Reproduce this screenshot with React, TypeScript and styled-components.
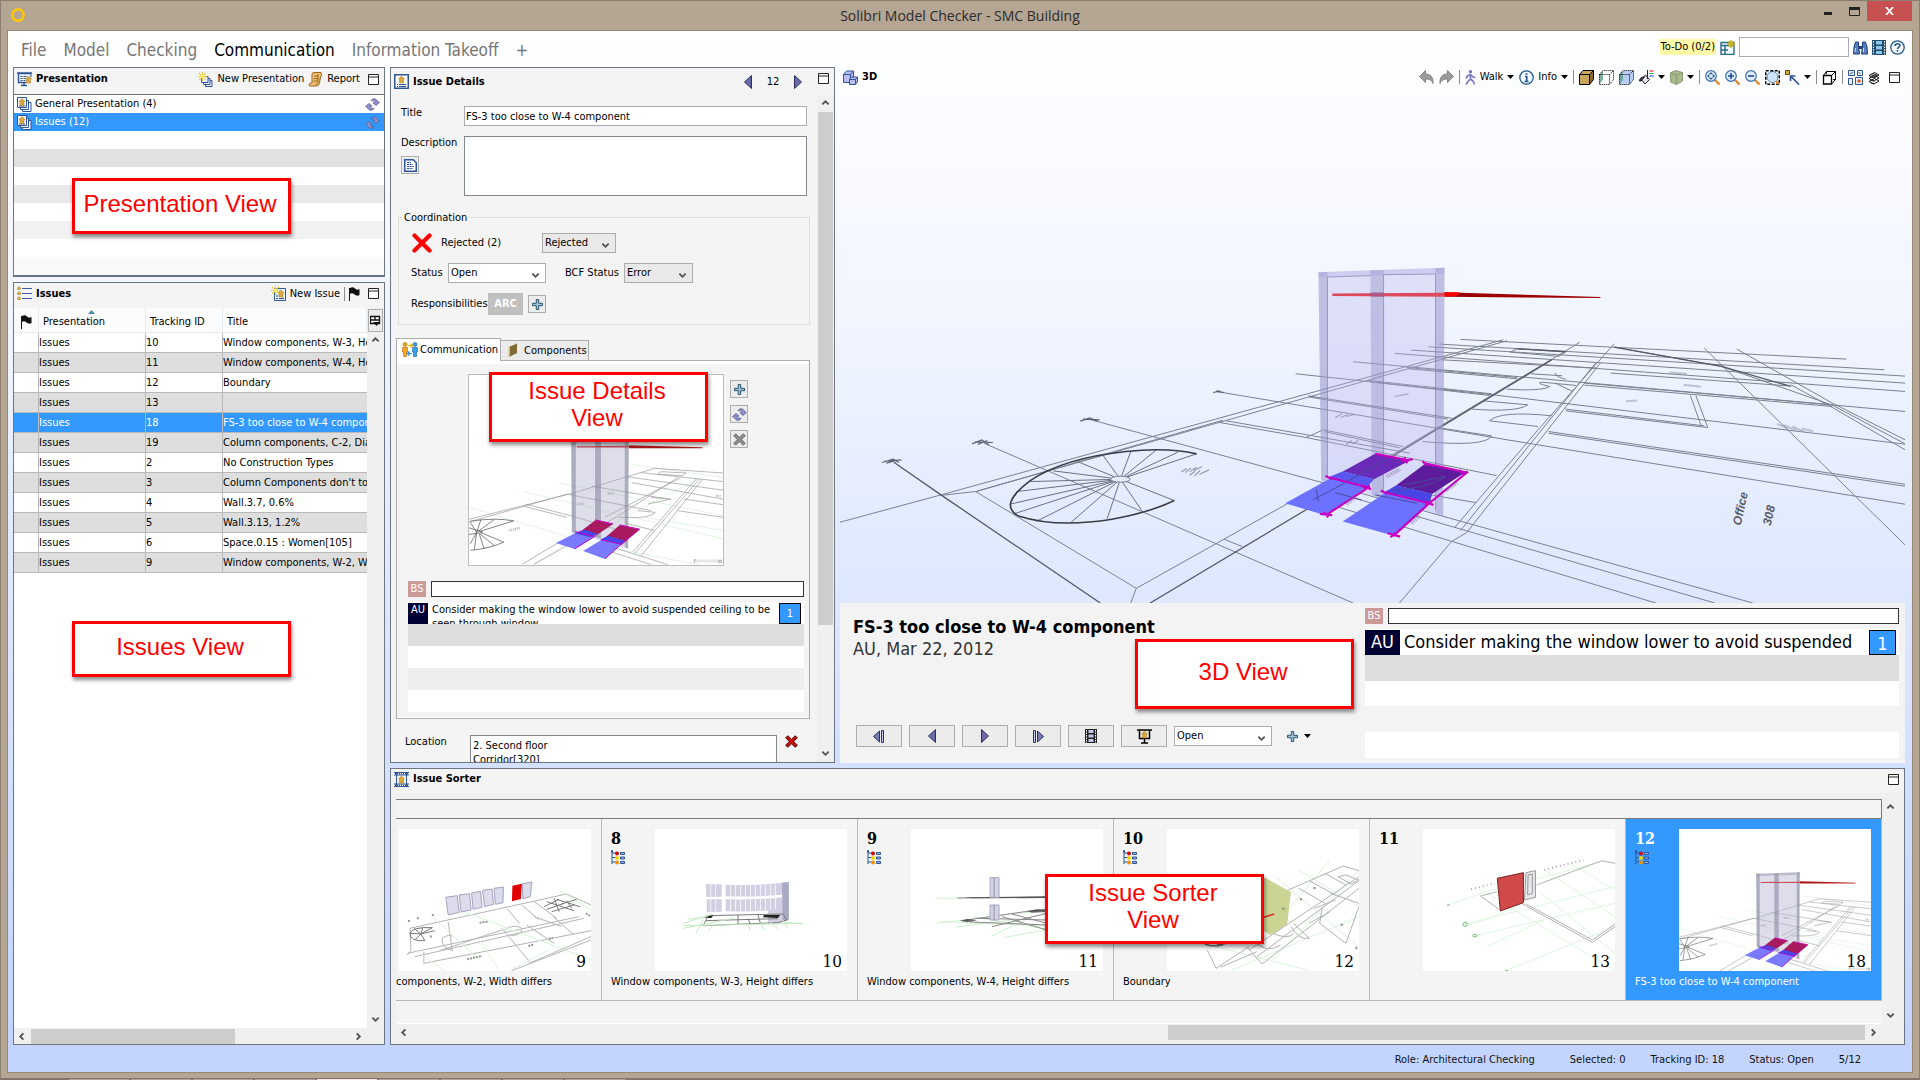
import React from "react";
import styled, { createGlobalStyle, css } from "styled-components";

const ui = `"DejaVu Sans Condensed", "DejaVu Sans", sans-serif`;

const GlobalStyle = createGlobalStyle`
  * { box-sizing: border-box; }
  html, body, #root { height: 100%; margin: 0; }
  body { font: 11px/14px ${ui}; color: #000; overflow: hidden; }
  button, input, select, textarea { font: inherit; color: inherit; margin: 0; border-radius: 0; }
  button { padding: 0; border: 0; background: none; }
  svg { display: block; flex: none; }
`;

/* ---------- window chrome ---------- */

const Desktop = styled.div`
  display: flex;
  flex-direction: column;
  height: 100vh;
  background: #84766c;
`;
const Frame = styled.div`
  flex: 1;
  min-height: 0;
  display: flex;
  flex-direction: column;
  padding: 0 7px 6px;
  background: #b5a593;
  border: 1px solid #8c7e70;
  border-bottom: 0;
`;
const TitleBar = styled.header`
  display: grid;
  grid-template-columns: 1fr auto 1fr;
  height: 29px;
  flex: none;
`;
const TitleIcon = styled.div`
  padding: 6px 2px;
`;
const WindowTitle = styled.h1`
  margin: 0;
  font: 400 14px/30px "Open Sans", "Noto Sans", sans-serif;
  color: #2b2b2b;
`;
const WindowButtons = styled.div`
  display: flex;
  justify-content: flex-end;
  height: 20px;
  padding-right: 0;
`;
const WindowButton = styled.button<{ $close?: boolean }>`
  display: grid;
  place-items: center;
  width: ${(p) => (p.$close ? 45 : 26)}px;
  background: ${(p) => (p.$close ? "#c75050" : "transparent")};
`;
const Client = styled.div`
  flex: 1;
  min-height: 0;
  display: flex;
  flex-direction: column;
  border: 1px solid #978877;
  margin: 0 -1px -1px;
  padding: 0 7px 0 5px;
  background: linear-gradient(#ffffff, #f1f5ff 28%, #dde7ff 55%, #c3d5ff 97%);
`;
const MenuBar = styled.div`
  display: flex;
  justify-content: space-between;
  align-items: center;
  height: 36px;
  flex: none;
  padding-left: 8px;
`;
const MenuNav = styled.nav`
  display: flex;
  gap: 17px;
  padding-top: 1px;
`;
const MenuButton = styled.button<{ $active?: boolean }>`
  font-size: 17px;
  line-height: 24px;
  color: ${(p) => (p.$active ? "#000" : "#767676")};
`;
const Tools = styled.div`
  display: flex;
  align-items: center;
  gap: 4px;
  padding-bottom: 4px;
`;
const Todo = styled.span`
  padding: 1px 1px;
  background: #fff9a8;
  white-space: nowrap;
`;
const SearchInput = styled.input`
  width: 110px;
  height: 20px;
  border: 1px solid #abadb3;
  background: #fff;
`;
const IconButton = styled.button`
  display: grid;
  place-items: center;
`;
const MaxButton = styled(IconButton)<{ $top?: boolean }>`
  margin-left: 4px;
  ${(p) => p.$top && "align-self: flex-start; margin-top: 5px;"}
`;
const Workspace = styled.main`
  flex: 1;
  min-height: 0;
  display: grid;
  grid-template-columns: 372px minmax(0, 1fr);
  gap: 5px;
`;
const LeftColumn = styled.div`
  display: flex;
  flex-direction: column;
  gap: 5px;
  min-height: 0;
`;
const RightColumn = styled.div`
  display: flex;
  flex-direction: column;
  gap: 5px;
  min-height: 0;
`;
const TopRow = styled.div`
  flex: 1;
  min-height: 0;
  display: grid;
  grid-template-columns: 445px minmax(0, 1fr);
  gap: 5px;
`;
const StatusBar = styled.footer`
  display: flex;
  justify-content: flex-end;
  gap: 25px;
  height: 27px;
  line-height: 30px;
  padding-right: 44px;
  color: #111;
`;
const StatusRole = styled.span`
  margin-right: 10px;
`;
const TaskStrip = styled.div`
  display: flex;
  gap: 2px;
  height: 2px;
  padding: 1px 0 0 69px;
`;
const TaskItem = styled.i<{ $on?: boolean }>`
  width: 60px;
  background: ${(p) => (p.$on ? "#efe6e6" : "#b1a29b")};
`;

/* ---------- panels ---------- */

const Panel = styled.section<{ $grow?: boolean }>`
  position: relative;
  display: flex;
  flex-direction: column;
  min-height: 0;
  ${(p) => p.$grow && "flex: 1;"}
  border: 1px solid #6c7683;
  background: #f4f4f4;
`;
const PanelHeader = styled.div<{ $h?: number; $low?: boolean }>`
  display: flex;
  align-items: center;
  gap: 4px;
  flex: none;
  height: ${(p) => p.$h ?? 24}px;
  padding: 0 5px ${(p) => (p.$low ? 0 : 4)}px 3px;
`;
const PanelTitle = styled.h2`
  margin: 0 auto 0 0;
  font-size: 11px;
  font-weight: 700;
`;
const LinkButton = styled.button`
  display: flex;
  align-items: center;
  gap: 4px;
  white-space: nowrap;
`;
const Callout = styled.div<{ $x: number; $y: number; $h?: number }>`
  position: absolute;
  z-index: 5;
  left: ${(p) => p.$x}px;
  top: ${(p) => p.$y}px;
  width: 219px;
  height: ${(p) => p.$h ?? 70}px;
  display: grid;
  place-items: center;
  padding: ${(p) => (p.$h ? "0 3px 6px 0" : "0 33px 6px 30px")};
  border: 3px solid #f00;
  background: #fff;
  box-shadow: 1px 3px 4px rgba(0, 0, 0, 0.45);
  font: 24px/27px "Liberation Sans", Arial, sans-serif;
  color: #f00;
  text-align: center;
`;
const Divider = styled.span`
  width: 1px;
  height: 14px;
  background: #8d8d8d;
`;

/* presentation list */
const PresentationList = styled.ul`
  margin: 0;
  padding: 0;
  list-style: none;
  border-top: 1px solid #6c7683;
  border-bottom: 1px solid #6c7683;
`;
const PresentationItem = styled.li<{ $bg: string; $on?: boolean }>`
  display: flex;
  align-items: center;
  gap: 3px;
  height: 18px;
  padding: 0 4px 0 3px;
  background: ${(p) => p.$bg};
  color: ${(p) => (p.$on ? "#fff" : "#000")};
  span { flex: 1; }
`;

/* issues table */
const TableArea = styled.div`
  flex: 1;
  min-height: 0;
  display: grid;
  grid-template-columns: minmax(0, 1fr) 17px;
  grid-template-rows: minmax(0, 1fr) 16px;
  background: #f0f0f0;
`;
const TableView = styled.div`
  overflow: hidden;
  background: #fff;
`;
const Table = styled.table`
  width: 100%;
  table-layout: fixed;
  border-collapse: separate;
  border-spacing: 0;
`;
const Th = styled.th<{ $w?: number }>`
  ${(p) => p.$w && `width: ${p.$w}px;`}
  height: 25px;
  padding: 3px 0 0 ${(p) => (p.$w === 25 ? 7 : 4)}px;
  font-weight: 400;
  text-align: left;
  background: #fcfcfc;
  border-right: 1px solid #e6ebf3;
  border-bottom: 1px solid #e6ebf3;
`;
const SortHead = styled.div`
  display: grid;
  svg { grid-area: 1 / 1; justify-self: center; margin: -5px 0 0 -5px; }
  span { grid-area: 1 / 1; }
`;
const Td = styled.td`
  height: 20px;
  padding: 0;
  overflow: hidden;
  white-space: nowrap;
  border-right: 1px solid #b9b9b9;
  border-bottom: 1px solid #b9b9b9;
  &:last-child { border-right: 0; }
`;
const Tr = styled.tr<{ $bg: string; $on?: boolean }>`
  background: ${(p) => p.$bg};
  color: ${(p) => (p.$on ? "#fff" : "#000")};
`;

/* scroll bars */
const VBar = styled.div`
  display: flex;
  flex-direction: column;
  align-items: center;
  justify-content: space-between;
  width: 17px;
  background: #f0f0f0;
`;
const VTrack = styled.div`
  flex: 1;
  width: 15px;
`;
const VThumb = styled.div<{ $h: string }>`
  height: ${(p) => p.$h};
  background: #cdcdcd;
`;
const HBar = styled.div`
  display: flex;
  align-items: center;
  height: 16px;
  background: #f0f0f0;
`;
const HTrack = styled.div`
  flex: 1;
  height: 15px;
  display: flex;
`;
const HThumb = styled.div<{ $w: string; $right?: boolean }>`
  width: ${(p) => p.$w};
  background: #cdcdcd;
  ${(p) => p.$right && "margin-left: auto;"}
`;
const ArrowButton = styled.button`
  display: grid;
  place-items: center;
  width: 17px;
  height: 17px;
  flex: none;
`;
const ColumnControl = styled.button`
  display: grid;
  place-items: center;
  width: 15px;
  height: 23px;
  margin: 1px 1px 0;
  border: 1px solid #adadad;
  background: #ececec;
`;

/* form */
const DetailsBody = styled.div`
  flex: 1;
  min-height: 0;
  display: flex;
`;
const DetailsForm = styled.form`
  flex: 1;
  min-width: 0;
  overflow: hidden;
  padding: 11px 7px 0 5px;
`;
const FormRow = styled.div`
  display: grid;
  grid-template-columns: 63px minmax(0, 1fr);
  padding: 0 3px 0 5px;
  margin-bottom: 10px;
`;
const TextInput = styled.input`
  height: 20px;
  padding: 0 1px;
  border: 1px solid #abadb3;
  background: #fff;
`;
const TextBox = styled.textarea`
  display: block;
  height: 60px;
  padding: 2px;
  border: 1px solid #82868f;
  background: #fff;
  resize: none;
  overflow: hidden;
`;
const SmallButton = styled.button`
  display: grid;
  place-items: center;
  width: 18px;
  height: 18px;
  border: 1px solid #adadad;
  background: #ececec;
`;
const LabelStack = styled.div`
  display: flex;
  flex-direction: column;
  align-items: flex-start;
  gap: 6px;
`;
const Fieldset = styled.fieldset`
  margin: 14px 0 13px 2px;
  padding: 8px 0 9px 12px;
  border: 1px solid #dcdcdc;
  min-width: 0;
`;
const Legend = styled.legend`
  margin-left: -9px;
  padding: 1px 3px 0 2px;
`;
const FieldRow = styled.div`
  display: flex;
  align-items: center;
  min-height: 20px;
  margin-top: 10px;
  &:first-of-type { margin-top: 0; }
`;
const FieldLabel = styled.label<{ $w: number }>`
  width: ${(p) => p.$w}px;
`;
const RejectMark = styled.span`
  width: 30px;
`;
const SelectWrap = styled.span<{ $w: number; $gray?: boolean; $gap?: number }>`
  display: grid;
  align-items: center;
  width: ${(p) => p.$w}px;
  height: 20px;
  margin-right: ${(p) => p.$gap ?? 0}px;
  border: 1px solid #acacac;
  background: ${(p) => (p.$gray ? "#e9e9e9" : "#fff")};
  select {
    grid-area: 1 / 1;
    appearance: none;
    width: 100%;
    height: 18px;
    padding: 0 2px;
    border: 0;
    background: none;
  }
  svg { grid-area: 1 / 1; justify-self: end; margin: 4px 5px 0 0; pointer-events: none; }
`;
const RoleTag = styled.span`
  width: 35px;
  margin-right: 5px;
  background: #c0c0c0;
  color: #fff;
  font-size: 11px;
  font-weight: 700;
  line-height: 22px;
  text-align: center;
`;
const TabList = styled.div`
  display: flex;
  align-items: flex-end;
  height: 22px;
`;
const Tab = styled.button<{ $on?: boolean }>`
  display: flex;
  align-items: center;
  gap: 2px;
  height: ${(p) => (p.$on ? 23 : 20)}px;
  padding: 0 2px 1px 5px;
  margin-bottom: ${(p) => (p.$on ? -1 : 0)}px;
  border: 1px solid #acacac;
  border-bottom: 0;
  ${(p) => !p.$on && "border-left: 0; gap: 6px; padding: 0 1px 0 7px;"}
  background: ${(p) => (p.$on ? "#fff" : "#ebebeb")};
  z-index: 1;
`;
const TabPanel = styled.div`
  padding: 13px 5px 6px 11px;
  border: 1px solid #acacac;
  box-shadow: inset 0 3px #fff, inset 0 -1px #fff;
`;
const Snapshot = styled.div`
  display: flex;
  gap: 6px;
  margin: 0 0 15px 60px;
`;
const SnapshotImage = styled.div`
  width: 256px;
  height: 192px;
  border: 1px solid #bdbdbd;
  background: #fff;
`;
const SnapshotTools = styled.div`
  display: flex;
  flex-direction: column;
  gap: 7px;
  padding-top: 6px;
`;
const LocationRow = styled.div`
  display: flex;
  align-items: flex-start;
  margin: 16px 0 0 9px;
`;
const LocationBox = styled.textarea`
  width: 307px;
  height: 60px;
  margin-right: 8px;
  padding: 3px 2px;
  border: 1px solid #82868f;
  background: #fff;
  resize: none;
  overflow: hidden;
`;
const PagerLabel = styled.output`
  width: 34px;
  text-align: center;
`;
const HeaderSpacer = styled.span`
  width: 4px;
`;

/* comments */
const Comments = styled.div<{ $large?: boolean }>`
  display: flex;
  flex-direction: column;
  ${(p) =>
    p.$large &&
    css`
      flex: none;
      width: 534px;
    `}
`;
const NewComment = styled.div`
  display: flex;
  gap: 5px;
  margin-bottom: 5px;
  height: 16px;
`;
const AuthorTag = styled.label`
  width: 18px;
  background: #cc9999;
  color: #fff;
  line-height: 16px;
  text-align: center;
`;
const CommentInput = styled.input`
  flex: 1;
  min-width: 0;
  border: 1px solid #333;
  background: #fff;
`;
const CommentRow = styled.div<{ $large?: boolean; $bg: string }>`
  display: flex;
  height: ${(p) => (p.$large ? 27 : 22)}px;
  padding: 1px 3px 0 0;
  overflow: hidden;
  background: ${(p) => p.$bg};
  ${(p) => p.$large && "font-size: 18px; line-height: 23px;"}
`;
const CommentAuthor = styled.span<{ $large?: boolean }>`
  width: ${(p) => (p.$large ? 35 : 20)}px;
  flex: none;
  background: #000033;
  color: #fff;
  text-align: center;
`;
const CommentText = styled.span`
  flex: 1;
  min-width: 0;
  padding-left: 4px;
`;
const CommentCount = styled.span<{ $large?: boolean }>`
  width: ${(p) => (p.$large ? 27 : 22)}px;
  flex: none;
  line-height: ${(p) => (p.$large ? 25 : 19)}px;
  border: 1px solid #000;
  background: #3399ff;
  color: #fff;
  text-align: center;
`;

/* 3D */
const ThreeD = styled.section`
  display: flex;
  flex-direction: column;
  min-height: 0;
`;
const ThreeDHeader = styled.div`
  display: flex;
  align-items: center;
  height: 20px;
  padding: 0 5px 0 3px;
  gap: 4px;
`;
const ThreeDTools = styled.div`
  display: flex;
  align-items: center;
  gap: 5px;
`;
const Canvas = styled.svg`
  flex: 1 1 0;
  min-height: 0;
  width: 100%;
`;
const InfoPanel = styled.div`
  position: relative;
  display: flex;
  height: 160px;
  flex: none;
  padding: 5px 6px 5px 13px;
  background: #f3f3f3;
`;
const InfoLeft = styled.div`
  flex: 1;
  display: flex;
  flex-direction: column;
`;
const InfoTitle = styled.h3`
  margin: 8px 0 0;
  font-size: 18px;
  line-height: 22px;
`;
const InfoMeta = styled.p`
  margin: 0;
  font-size: 18px;
  line-height: 22px;
  color: #333;
`;
const PlayRow = styled.div`
  display: flex;
  align-items: center;
  gap: 7px;
  margin: auto 0 11px 3px;
`;
const PlayButton = styled.button`
  display: grid;
  place-items: center;
  width: 46px;
  height: 22px;
  border: 1px solid #adadad;
  background: #ececec;
`;
const AddButton = styled.button`
  display: flex;
  align-items: center;
  gap: 6px;
  margin-left: 8px;
`;

/* sorter */
const SorterBody = styled.div`
  display: grid;
  grid-template-columns: minmax(0, 1fr) 22px;
  padding: 6px 0 0 5px;
  background: #f0f0f0;
`;
const SorterMain = styled.div`
  background: #f4f4f4;
  border-bottom: 1px solid #fff;
  padding-bottom: 22px;
`;
const SorterBand = styled.div`
  height: 20px;
  border: 1px solid #7c7c7c;
  border-left: 0;
`;
const SorterCells = styled.ol`
  display: flex;
  margin: 0;
  padding: 0;
  list-style: none;
  border-bottom: 1px solid #b9b9b9;
`;
const SorterCell = styled.li<{ $on?: boolean; $first?: boolean }>`
  ${(p) => (p.$first ? "flex: 1; min-width: 0;" : "flex: none; width: 256px;")}
  height: 181px;
  padding: 10px 10px 0 0;
  border-right: 1px solid #b9b9b9;
  background: ${(p) => (p.$on ? "#3399ff" : "transparent")};
  color: ${(p) => (p.$on ? "#fff" : "#000")};
`;
const CellTop = styled.div`
  display: flex;
  justify-content: flex-end;
`;
const CellSide = styled.div<{ $first?: boolean }>`
  flex: 1;
  min-width: 0;
  padding-left: ${(p) => (p.$first ? 0 : 9)}px;
`;
const CellIndex = styled.b`
  display: block;
  margin-bottom: 1px;
  font: 700 16px/20px "DejaVu Serif Condensed", "DejaVu Serif", serif;
`;
const Thumb = styled.div`
  flex: none;
  display: grid;
  width: 192px;
  height: 142px;
  background: #fff;
  overflow: hidden;
  svg { grid-area: 1 / 1; }
`;
const ThumbId = styled.span`
  grid-area: 1 / 1;
  align-self: end;
  justify-self: end;
  padding-right: 5px;
  font: 400 17px/20px "DejaVu Serif Condensed", "DejaVu Serif", serif;
  color: #000;
`;
const CellCaption = styled.div<{ $first?: boolean }>`
  height: 20px;
  padding: 4px 0 0 ${(p) => (p.$first ? 0 : 9)}px;
  white-space: nowrap;
`;
const SorterScroll = styled(HBar)`
  height: 20px;
  padding-bottom: 4px;
`;
const ColumnTools = styled.div`
  width: 17px;
`;

/* ---------- icons ---------- */

const blue = "#2f5597";
const gold = "#d9a93a";

const I = ({ s = 15, children }: { s?: number; children: React.ReactNode }) => (
  <svg width={s} height={s} viewBox="0 0 15 15" fill="none">{children}</svg>
);
const House = ({ x = 0, y = 0 }) => (
  <path d={`M${x + 3} ${y}l3 3h-1v4h-4v-4h-1z`} fill={gold} stroke="#a67820" strokeWidth=".5" />
);
const BoardIcon = () => (
  <I><path d="M14 1.500H1.500v9H9M0 1h15M4 13.500h6M7 10v3" stroke={blue} strokeWidth="1.400" /><path d="M3.500 4.500h2m1 0h3M3.500 6.500h2m1 0h2M3.500 8.500h2m1 0h2" stroke={blue} /><path d="M14 2v3" stroke={blue} /><House x={8.500} y={4} /></I>
);
const StackIcon = () => (
  <I><path d="M5.500 5.500h8.500v9H5.500z" fill="#f5f8ff" stroke={blue} /><path d="M3.500 3.500h8v9h-8z" fill="#f5f8ff" stroke={blue} /><path d="M.5.500h9v10h-9z" fill="#f5f8ff" stroke={blue} /><path d="M2 9h6" stroke={blue} /><House x={2} y={1.500} /></I>
);
const Star = () => (
  <><path d="M4.500 0v9M0 4.500h9M1 1l7 7M8 1L1 8" stroke="#e3c52e" strokeWidth="1.200" strokeDasharray="1.500 .5" /><circle cx="4.500" cy="4.500" r="2" fill="#fbe96a" /></>
);
const NewStackIcon = () => (
  <I><path d="M7.500 8.500h6.500v6H7.500z" fill="#eaf1ff" stroke={blue} /><path d="M5.500 6.500h6.500v6H5.500z" fill="#eaf1ff" stroke={blue} /><path d="M3.500 4.500h6.500v6H3.500z" fill="#eaf1ff" stroke={blue} /><Star /></I>
);
const ScrollIcon = () => (
  <I><path d="M4 2.500Q4 .5 6 .5h7Q14.500 3 12.500 5L11.500 11Q11 14 8 14H1.500Q0 12 2.500 11H4z" fill="#f0c070" stroke="#9c6420" /><path d="M6 4h4M6 6.500h4M5.500 9h4M10 2v8l-2 3" stroke="#9c6420" /></I>
);
const MaxIcon = () => (
  <svg width="11" height="11" viewBox="0 0 11 11"><path d="M.5.5h10v10H.5zM.5 3h10" fill="#fff" stroke="#222" /></svg>
);
const RefreshIcon = () => (
  <I><path d="M14.500 5.500L11 8.500 8 6l1.500-.5C9 3.500 7.500 3 6 4c.5-2.500 5-4 7 1z" fill="#8f8fcc" stroke="#54548e" strokeWidth=".7" /><path d="M.5 9.500L4 6.500 7 9l-1.500.5c.5 2 2 2.500 3.500 1.500-.5 2.500-5 4-7-1z" fill="#8f8fcc" stroke="#54548e" strokeWidth=".7" /></I>
);
const ListIcon = () => (
  <I><path d="M5 2.500h10M5 7.500h10M5 12.500h10" stroke="#3a5aa8" /><path d="M2 .5L3.500 2v1.500h-3V2zM2 5.500L3.500 7v1.500h-3V7zM2 10.500L3.500 12v1.500h-3V12z" fill={gold} stroke="#a67820" strokeWidth=".5" /></I>
);
const NewIssueIcon = () => (
  <I><path d="M3.500 2.500h11v12h-11z" fill="#eaf1ff" stroke={blue} /><path d="M5 12.500h2m1 0h5M5 10h2" stroke={blue} /><House x={7} y={4} /><Star /></I>
);
const FlagIcon = () => (
  <svg width="11" height="14" viewBox="0 0 11 14"><path d="M.5 1v13" stroke="#111" /><path d="M1 1q3-1.500 5 .5t4.500.5V8Q8 9.500 5.500 7.500T1 7z" fill="#111" /></svg>
);
const DetailsIcon = () => (
  <I><path d="M.75.750h13.500v13.500H.75z" fill="#fff" stroke={blue} strokeWidth="1.500" /><path d="M3 12.500h1m1 0h7M3 10.500h1m1 0h7" stroke={blue} /><House x={4.500} y={2} /></I>
);
const SorterIcon = () => (
  <I><path d="M2.500 0v15M12.500 0v15" stroke={blue} /><path d="M0 .5h15M0 3h15M0 12h15M0 14.500h15" stroke={blue} /><path d="M1 1.700h14M1 13.200h14" stroke={blue} strokeWidth="1.600" strokeDasharray="1 1" /><House x={4.500} y={4} /></I>
);
const Tri = ({ flip }: { flip?: boolean }) => (
  <svg width="8" height="14" viewBox="0 0 8 14"><path d={flip ? "M.5.500L7.500 7 .5 13.500z" : "M7.500.500L.5 7l7 6.500z"} fill="#6a6aa8" stroke="#2d2d5e" /></svg>
);
const NoteIcon = () => (
  <svg width="13" height="13" viewBox="0 0 13 13" fill="none"><path d="M.75.750h8.500l3 3v8.500H.75z" fill="#fff" stroke={blue} strokeWidth="1.500" /><path d="M3 3.500h4M3 5.500h6M3 7.500h7M3 9.500h6" stroke={blue} strokeDasharray="2 .7" /></svg>
);
const RedX = () => (
  <svg width="21" height="20" viewBox="0 0 21 20"><path d="M3.500 2.500l15 15M18.500 2.500l-15 15" stroke="#f00" strokeWidth="4.200" strokeLinecap="round" /></svg>
);
const CrossIcon = ({ c = "#cc1111", e = "#5c0000" }) => (
  <svg width="13" height="13" viewBox="0 0 13 13"><path d="M1.500 1.500l10 10M11.500 1.500l-10 10" stroke={e} strokeWidth="3.800" /><path d="M2 2l9 9M11 2l-9 9" stroke={c} strokeWidth="2.200" /></svg>
);
const PlusIcon = () => (
  <svg width="11" height="11" viewBox="0 0 11 11"><path d="M4.300.5h2.400v3.800h3.800v2.400H6.700v3.800H4.300V6.700H.5V4.300h3.800z" fill="#9cc3dc" stroke="#2c5670" /></svg>
);
const PeopleIcon = () => (
  <svg width="16" height="15" viewBox="0 0 16 15"><circle cx="3" cy="2.500" r="2" fill="#f5a623" stroke="#b06a00" strokeWidth=".6" /><path d="M.5 5.500h5V10h-1v4.500h-3V10h-1z" fill="#f5a623" stroke="#b06a00" strokeWidth=".6" /><circle cx="13" cy="2.500" r="2" fill="#3aa0e8" stroke="#1d5f9c" strokeWidth=".6" /><path d="M10.500 5.500h5V10h-1v4.500h-3V10h-1z" fill="#3aa0e8" stroke="#1d5f9c" strokeWidth=".6" /><path d="M6 3.500h3M9 1.500l2 2-2 2z" stroke="#e8b400" fill="#e8b400" /><path d="M7 11.500h3M7 9.500l-2 2 2 2z" stroke="#2d8fe0" fill="#2d8fe0" /></svg>
);
const ComponentIcon = () => (
  <svg width="10" height="15" viewBox="0 0 10 15"><path d="M1 4l8-3.500V10L1 14z" fill="#7d6a35" /><path d="M.5 4v10l1.500-.7V3.500z" fill="#d2bf86" /></svg>
);
const Chevron = ({ d }: { d: "up" | "down" | "left" | "right" }) => {
  const paths = { up: "M1.500 6L5 2.500 8.500 6", down: "M1.500 3L5 6.500 8.500 3", left: "M6 1.500L2.500 5 6 8.500", right: "M3 1.500L6.500 5 3 8.500" };
  return <svg width="9" height="9" viewBox="0 0 10 10"><path d={paths[d]} fill="none" stroke="#505050" strokeWidth="2" /></svg>;
};
const Caret = () => <svg width="7" height="4" viewBox="0 0 7 4"><path d="M0 0h7L3.500 4z" fill="#000" /></svg>;
const CubesIcon = () => (
  <I><path d="M.5 4.500l3-3.500h7v8l-3 3.500h-7z" fill="#b9bdf0" stroke={blue} /><path d="M.5 4.500h7v8M7.500 4.500l3-3.500" stroke={blue} /><path d="M6.500 9l2-2h6v5l-2 2.500h-6z" fill="#b9bdf0" stroke={blue} /><path d="M6.500 9.500h6v5M12.500 9.500l2-2.500" stroke={blue} /></I>
);
const UndoIcon = ({ flip }: { flip?: boolean }) => (
  <svg width="15" height="14" viewBox="0 0 15 14"><path transform={flip ? "matrix(-1 0 0 1 15 0)" : undefined} d="M6.500.500v3.500c5 0 8 3 7.500 9.500C12.500 10 10.500 9 6.500 9v3.500L.5 6.500z" fill="#9b9b9b" stroke="#858585" /></svg>
);
const WalkIcon = () => (
  <svg width="11" height="15" viewBox="0 0 11 15" fill="none"><circle cx="5.500" cy="1.800" r="1.800" fill="#7d78c4" /><path d="M5.500 4v5L3 11.500 1 14.500M5.500 9L8 11l1.500 3.500M5.500 4.500L2.500 6 1 8.500M5.500 4.500L8 7l2.500.5" stroke="#7d78c4" strokeWidth="1.700" /></svg>
);
const InfoIcon = ({ t = "i" }) => (
  <I><circle cx="7.500" cy="7.500" r="6.700" fill="#f4f9ff" stroke="#25598c" strokeWidth="1.300" />{t === "i" ? <path d="M7.500 3v1.800M6 6.500h1.700V11M5.500 11.500h4" stroke="#25598c" strokeWidth="1.700" /> : <path d="M5 6c0-3 5-3 5-.5 0 1.500-2.500 1.700-2.500 3.500M7.500 10v1.800" stroke="#25598c" strokeWidth="1.600" />}</I>
);
const BoxIcon = ({ f = "#c9a55a", side = "#8c6c2c", e = "#000", dash }: { f?: string; side?: string; e?: string; dash?: boolean }) => (
  <I><path d="M.5 4.500L4 .5h10.500v9l-4 5H.5z" fill={f} /><path d={dash ? "M.5 4.500L4 .5v9l-3.500 5z" : "M10.500 4.500l4-4v9l-4 5z"} fill={side} /><path d="M.5 4.500L4 .5h10.500v9l-4 5H.5zM.5 4.500h10v10M10.500 4.500l4-4" stroke={e} strokeDasharray={dash ? "1 1" : undefined} /></I>
);
const PaintIcon = () => (
  <I><path d="M10.500 1h4" stroke="#f00" /><path d="M10.500 3.500h4" stroke="#1fae3a" /><path d="M10.500 6h4" stroke="#22f" /><path d="M2 9l4.500-4 4 4.500-4.500 4.500z" fill="#e4e4f0" stroke="#222" /><path d="M.5 11q0-4 5-4l-3.500 4zM8.500 0v9" fill="#3c3c6e" stroke="#222" /></I>
);
const PrismIcon = () => (
  <svg width="13" height="15" viewBox="0 0 13 15"><path d="M.5 3l5-2.500 7 2v8.500L6.500 14.500l-6-2.500z" fill="#a9b98c" stroke="#8b9a70" /><path d="M.5 3l6 2 6-2.500M6.500 5v9.500" fill="none" stroke="#8b9a70" /></svg>
);
const ZoomIcon = ({ k }: { k: "fit" | "in" | "out" }) => (
  <I><path d="M10 10l4.500 4.500" stroke="#e08a30" strokeWidth="2.400" /><circle cx="6" cy="6" r="5.300" fill="#dceafa" stroke="#3c6ea5" strokeWidth="1.200" /><path d={k === "fit" ? "M6 2.500L4.500 4h3zM6 9.500L4.500 8h3zM2.500 6L4 4.500v3zM9.500 6L8 4.500v3z" : k === "in" ? "M3 6h6M6 3v6" : "M3 6h6"} fill="#1f4f8b" stroke="#1f4f8b" strokeWidth={k === "fit" ? 0.5 : 1.6} /></I>
);
const ZoomAreaIcon = () => (
  <I><circle cx="7.500" cy="7" r="5.500" fill="#cfe3f7" stroke="#5b8fc4" /><path d="M.75.750h13.500v13.500H.75z" stroke="#000" strokeWidth="1.500" strokeDasharray="3 1.500" /><path d="M11 11l3 3" stroke="#e08a30" strokeWidth="2" /></I>
);
const PickIcon = () => (
  <I><path d="M.5.500h4v4h-4z" fill={gold} stroke="#5a4210" /><path d="M5.500 6l8.500 8.500M5.500 11V6h5" stroke={blue} strokeWidth="1.700" /></I>
);
const SheetsIcon = () => (
  <I><path d="M4.500 4V1.500h9v8h-2.500" fill="#fff" stroke="#000" /><path d="M1.500 5.500h8v8.500h-8z" fill="#fff" stroke="#000" strokeWidth="1.300" /><path d="M1.500 5.500l3-4M9.500 5.500l4-4M9.500 14l4-4.500" stroke="#000" /></I>
);
const PlanIcon = () => (
  <I><path d="M.5.500h6v5h-6zM9.500.500h5v5h-5zM.5 8.500h4v6h-4zM7.500 7.500h7v7h-7z" fill="#eaf1ff" stroke={blue} /><circle cx="11" cy="11" r="1.800" fill="#e05a1c" /><path d="M2 4l3-2M10.500 2l2 2" stroke={blue} /></I>
);
const LayersIcon = () => (
  <svg width="12" height="15" viewBox="0 0 12 15"><path d="M1 11.500l5 2.500 5-3-4.500-2.500zM1 8.500l5 2.500 5-3-4.500-2.500zM1 5.500l5 2.500 5-3L6.500 2.500z" fill="#fff" stroke="#111" /><path d="M3 4.500l5 2M5 3.500l4.500 2M3 7l3.500-2.500M5 8l4-3M3 10l3 1.500M3 13l3 1" stroke="#111" strokeWidth=".8" /></svg>
);
const TodoIcon = () => (
  <I><path d="M1 2.500h13v12H1zM1 5.500h13M5 6v9M1 10h7" stroke="#2a6a86" strokeWidth="1.400" fill="#f2f8ff" /><path d="M11 0v8M7 4h8M8.500 1.500l5 5M13.500 1.500l-5 5" stroke="#c9b31c" strokeWidth="1.500" /></I>
);
const BinocularsIcon = () => (
  <I><path d="M2.500 2h3v4l1 8H.5l.5-7zM12.500 2h-3v4l-1 8h6L14 7z" fill="#5a7fb8" stroke="#1d3e78" /><path d="M6 6h3v3H6z" fill="#1d3e78" /><path d="M2.500 8l-.5 4M10.500 8v4" stroke="#cfe0f7" /></I>
);
const FilmIcon = ({ c = "#1d4a6e", m = "#8fc7e8" }) => (
  <svg width="14" height="15" viewBox="0 0 14 15"><path d="M0 0h14v15H0z" fill={c} /><path d="M1.500 1v14M12.500 1v14" stroke="#fff" strokeWidth="1.200" strokeDasharray="1.500 1.200" /><path d="M4 1h6v3.500H4zM4 6h6v3.500H4zM4 11h6v3H4z" fill={m} /></svg>
);
const FilmStripIcon = () => (
  <svg width="12" height="14" viewBox="0 0 12 14"><path d="M0 0h12v14H0z" fill="#222" /><path d="M1.500 1v13M10.500 1v13" stroke="#fff" strokeDasharray="1.500 1" /><path d="M3.500 1h5v3h-5zM3.500 5.500h5v3h-5zM3.500 10h5v3h-5z" fill="#c9c9ea" /></svg>
);
const TreeIcon = () => (
  <I><path d="M1 0v14M1 3h4M1 7.500h4M1 12h4" stroke={blue} /><path d="M0 .5h2v2H0z" fill={blue} /><circle cx="6" cy="3.500" r="2" fill="#d00" /><circle cx="6" cy="8" r="2" fill="#f2d400" /><circle cx="6" cy="12.500" r="2" fill="#f29100" /><path d="M9.500 2.500h4v2h-4zM9.500 7h4v2h-4zM9.500 11.500h4v2h-4z" fill="#9fb9e4" stroke={blue} /></I>
);
const StepIcon = ({ flip }: { flip?: boolean }) => (
  <svg width="12" height="13" viewBox="0 0 12 13"><g transform={flip ? "matrix(-1 0 0 1 12 0)" : undefined} fill="#7a7ab6" stroke="#2d2d5e"><path d="M6.500 1v11L.5 6.500z" /><path d="M8.500.500h2v12h-2z" fill="#c9c9ea" /></g></svg>
);
const ProjectorIcon = () => (
  <I><path d="M0 1h15M2.500 1v8.500h10V1M7.500 10v4M4 14h7" stroke="#000" strokeWidth="1.500" /><House x={4.500} y={2} /></I>
);

/* ---------- drawings ---------- */

const spokes = [[522,642],[495,637],[463,632],[427,635],[387,647],[350,665],[315,693],[282,725],[262,755],[252,793],[258,822],[290,845],[340,849],[393,836],[443,812],[490,782]];

const Model = () => (
  <Canvas viewBox="840 87 1064 516" preserveAspectRatio="xMidYMax slice" role="img" aria-label="3D model">
    <g transform="translate(835 240) scale(.692 .33333)" fill="none">
      <g stroke="#7c828c">
        <path vectorEffect="non-scaling-stroke" d="M7 847L153 765L965 300M155 766L203 755L970 303M205 754L560 541M203 755L435 1045L427 1089M435 1045L693 745L722 758M562 898L588 920" />
        <path vectorEffect="non-scaling-stroke" d="M215 610L748 1089M370 540L728 742L1325 1089M700 785L1185 1089M722 758L1270 1089M550 455L1000 610L1545 793M665 402L950 465L1545 613M748 366L1545 515M808 341L1545 455M832 331L1545 430M857 321L1545 409M872 313L1515 390M903 299L1460 358" />
        <path vectorEffect="non-scaling-stroke" d="M700 775L1035 358M712 768L1075 308M1125 312L1015 570L895 862M1105 370L912 878M1098 370L903 872M890 905L815 1089M890 905L912 878M1125 322L1280 380L1440 496L1545 612M1380 435L1440 503L1545 630M1302 328L1440 490L1545 600M1255 325L1545 915" />
        <path vectorEffect="non-scaling-stroke" d="M553 547L680 593L955 707M565 543L690 588L830 640M680 593L705 570L820 620M708 576L815 624M683 468L890 535M685 472L885 538M770 422L948 462M772 426L945 467M825 383L985 413M828 387L985 417M875 360L1100 385M1055 508L1255 558M1055 513L1260 563L1243 468M1235 467L1250 555M1120 400L1375 438M1082 430L1440 495M1082 436L1440 500M1030 575L1545 733M1030 580L1545 739M860 765L925 788M1040 430L1065 455" />
        <path vectorEffect="non-scaling-stroke" d="M975 337L985 327L1055 336L1045 350zM920 508Q985 518 1000 495L935 483M1035 528Q960 512 945 543M945 543L1015 560M848 605Q940 622 948 588L875 565M970 448Q1020 455 1032 440Q1010 430 1020 427L1070 437M1005 402L1050 408M1040 400Q1040 412 1055 418M800 752Q850 750 882 710" />
        {spokes.map(([x, y]) => <path key={x} stroke="#6c717a" vectorEffect="non-scaling-stroke" d={`M412 718L${x} ${y}`} />)}
        <ellipse cx="412" cy="718" rx="14" ry="9" vectorEffect="non-scaling-stroke" fill="#e6ecfb" />
      </g>
      <path vectorEffect="non-scaling-stroke" stroke="#3a3d44" strokeWidth="1.600" d="M522 642Q480 622 420 635Q330 655 282 722Q235 795 265 828Q320 865 400 838Q455 817 490 782" />
      <path vectorEffect="non-scaling-stroke" stroke="#555a63" strokeWidth="1.300" d="M85 667L153 765L383 1089M455 1089L700 785M1125 322L1280 380L1380 440M985 327L1055 336M720 755L1035 360" />
      <path vectorEffect="non-scaling-stroke" stroke="#5e626c" strokeWidth="1.200" d="M68 668L84 658L92 668M72 664L96 660M74 670L88 662M198 612L212 600L222 614M202 606L228 608M206 614L220 602M354 544L368 534L378 544M358 538L382 540M546 458L556 453M550 454L562 458" />
      <path vectorEffect="non-scaling-stroke" stroke="#7b808b" strokeWidth="1.200" d="M500 696L508 686M506 698L514 684M512 696L522 682M518 692L530 680M512 706L520 694M519 708L527 692M526 704L540 690M722 534L732 522M730 534L740 524M738 530L750 524M808 470L828 462M738 614L746 602M746 612L756 602" opacity=".75" />
      <path vectorEffect="non-scaling-stroke" stroke="#9297a3" strokeWidth="2" d="M1360 552L1376 566M1370 556L1388 572M1382 560L1400 576M1396 566L1412 574M1225 435L1250 441M1142 484L1158 482M1205 398L1230 402" opacity=".5" />
      <g>
        <path d="M698 98L880 84L878 828L785 772L702 722z" fill="#b9b3ea" fillOpacity=".34" />
        <path d="M698 98L880 84V102L698 112z" fill="#b9b9ea" fillOpacity=".5" />
        <path d="M698 98L711 97V728L702 722zM773 92L792 91V778L775 766zM867 85L880 84L878 828L867 820z" fill="#8d88c0" fillOpacity=".38" />
        <path vectorEffect="non-scaling-stroke" d="M711 112V715M792 105V760M867 103V810M711 112L773 108M792 105L867 103" stroke="#8480b4" strokeOpacity=".7" />
      </g>
      <path d="M718 161L880 159V171L718 169z" fill="#dc4a5c" />
      <path d="M880 158L1105 172V175L880 171z" fill="#9c0000" />
      <path d="M880 158L902 158L898 168L880 170z" fill="#f00" />
      <path d="M773 158L792 158V171H773z" fill="#9b5a90" fillOpacity=".7" />
      <path d="M780 642L830 662L778 718L733 695z" fill="#6a2ab8" />
      <path d="M733 695L778 718L768 742L708 826L650 790z" fill="#6c72ff" />
      <path d="M712 712L733 695L778 718L768 742z" fill="#5a56f0" />
      <path d="M853 670L910 697L862 762L810 737z" fill="#5c1c9c" />
      <path d="M810 737L862 762L858 792L808 888L733 845z" fill="#6c72ff" />
      <path d="M793 757L810 737L862 762L858 790z" fill="#4a44e4" />
      <path vectorEffect="non-scaling-stroke" stroke="#4a4a9a" d="M690 780L722 745L795 660M695 748L698 785M722 758L760 780M805 750Q850 750 882 710L820 735M780 765L840 790" />
      <path vectorEffect="non-scaling-stroke" stroke="#c800c0" strokeWidth="2.200" d="M780 642L830 662M712 712L770 743L710 824M850 670L912 698L858 790L806 888M793 757L858 790M822 652L826 670M818 664L834 658M700 822L718 826M706 816L712 832M760 738L774 748M764 750L772 736M902 690L908 708M904 702L914 696M850 785L864 795M852 796L862 782M798 880L816 890M802 892L810 878M708 708L718 718M788 752L798 762M848 664L856 678" />
      <path vectorEffect="non-scaling-stroke" stroke="#7d5aa8" strokeWidth="4" strokeDasharray="1.500 1" opacity=".45" d="M796 710L816 688M882 752L898 728M738 792L752 772M832 850L844 828" />
    </g>
    <g fontFamily="Liberation Sans, sans-serif" fontSize="12" fontStyle="italic" fontWeight="700" fill="#555a66">
      <text transform="translate(1740 526) rotate(-78)">Office</text>
      <text transform="translate(1770 526) rotate(-78)">308</text>
    </g>
  </Canvas>
);

const WindowScene = ({ w, h }: { w: number; h: number }) => (
  <svg width={w} height={h} viewBox="249 129 768 576" preserveAspectRatio="xMidYMid slice" fill="none">
    <g stroke="#d3f0d3" strokeWidth="2"><path d="M250 530L620 640L950 705M410 482L1017 625M520 456L1017 555M740 400L1017 440M780 560L1017 600M440 705L950 440" /></g>
    <g stroke="#9f9f9f" strokeWidth="2.200">
      <path d="M249 566L440 518L560 488L810 412L1017 426M249 574L545 490M420 520L560 556L690 595M415 527L545 560M545 490L800 540M620 466L850 505M730 438L1017 478M740 455L1017 505M770 425L1017 452M820 430L830 422L905 426L895 434zM410 702L520 636M445 702L700 556L880 440M660 560L890 440M945 445L750 670M955 445L770 676M935 445L745 664M650 640L850 703M640 652L800 703M730 580L810 600M790 520L860 505L800 500M880 540L1017 560M900 505L1017 522M700 560Q800 565 812 545L760 540" />
      <path d="M253 572Q330 560 384 571M253 660Q310 655 354 635M272 606L253 575M272 606L285 567M272 606L325 567M280 603L384 571M272 606L253 640M272 606L265 658M280 610L295 656M282 610L325 645M284 606L354 635M249 592L290 604M249 612L290 606" stroke="#555" />
      <path d="M370 600L404 592M575 520L600 518M668 488L688 488M995 495L1010 496" strokeWidth="7" strokeDasharray="4 2" opacity=".6" />
    </g>
    <path d="M558 312L732 306L730 655L560 605z" fill="#a9a9c8" fillOpacity=".38" />
    <path d="M558 312L572 311V610L560 605zM630 310L648 309V625L630 620zM720 307L732 306L730 655L720 650z" fill="#84849c" fillOpacity=".55" />
    <path d="M558 312L732 306V316L558 322z" fill="#9a9ab0" fillOpacity=".5" />
    <path d="M575 345L730 344V349L575 349z" fill="#cf4a5a" />
    <path d="M732 342L955 348V351L732 351z" fill="#b01818" />
    <path d="M632 568L685 580L625 620L585 604z" fill="#a81a60" />
    <path d="M585 600L635 616L568 656L512 638z" fill="#7a7aff" />
    <path d="M568 608L600 598L638 610L615 620z" fill="#4646e8" />
    <path d="M705 583L765 596L712 642L660 622z" fill="#a81a60" />
    <path d="M660 622L712 640L660 686L594 662z" fill="#7a7aff" />
    <path d="M645 628L670 616L722 632L710 642z" fill="#4646e8" />
    <path d="M632 568L685 580M570 603L628 618L568 656M705 583L765 596L708 642L660 686M648 628L712 642" stroke="#cc00c0" strokeWidth="3" />
    <path d="M930 692h85" stroke="#e8e8e8" strokeWidth="9" />
    <path d="M930 698V688h5M1004 690h8v7h-8z" stroke="#999" strokeWidth="2" />
  </svg>
);

const Thumb9 = () => (
  <svg width="192" height="142" fill="none"><g transform="scale(.4974 .3333) translate(-28 -207)">
    <g stroke="#b4b4b4"><path vectorEffect="non-scaling-stroke" d="M50 505L365 402L414 435M50 505L52 570L45 585M45 580L390 470M60 590L400 475M78 610L414 512M78 610L78 575M127 487L135 572M115 535Q130 520 135 530M115 535Q112 560 135 572M235 505L292 608M285 495L340 550M338 470L380 525M245 445L270 490M275 435L310 480M300 425L345 475M255 632L414 540M290 610L414 530M110 572L235 510M240 510Q260 490 275 505M250 525Q270 530 275 510M300 470L355 500" /></g>
    <path vectorEffect="non-scaling-stroke" stroke="#d8f4d8" d="M60 570L120 632M190 540L230 632M350 390L414 450M95 470L190 600M330 570L250 632M150 450L414 600" />
    <path vectorEffect="non-scaling-stroke" stroke="#777" d="M50 520Q55 500 95 503M50 520Q50 545 80 542M72 522L95 503M72 522L50 520M72 522L58 505M72 522L80 542M72 522L60 540M72 522L76 502M72 522L100 512M320 440L350 418M325 448L360 430M335 455L380 435M345 418L392 440M355 432L385 418M325 425L380 452M340 415L350 455M365 422L375 445" />
    <path vectorEffect="non-scaling-stroke" stroke="#999" strokeWidth="2" strokeDasharray="2 1" d="M190 488L208 485M165 598L195 588M90 530L96 528M288 558L298 554M330 536L338 534M404 460L412 468M48 480V486M66 472V478M96 462V468" />
    <path d="M122 412L145 407L149 457L127 465zM149 405L170 401L173 450L153 456zM174 399L192 394L195 442L177 448zM196 391L215 387L218 433L200 440zM219 385L238 381L237 428L222 433zM276 371L295 366L292 410L277 416z" fill="#dcdceb" stroke="#a3a3bf" vectorEffect="non-scaling-stroke" />
    <path d="M256 377L275 371L273 417L255 424z" fill="#e00000" />
  </g></svg>
);
const Thumb10 = () => (
  <svg width="192" height="142" fill="none"><g transform="scale(.4974 .3333) translate(-543 -207)">
    <path d="M645 373L677 373V410L646 411zM685 374Q760 378 812 366V401Q760 412 685 409zM647 418L677 418V455L647 456zM685 418Q760 420 812 410V445Q760 456 685 454zM770 450L812 440V480L785 492L770 488z" fill="#d0d0e2" />
    <path vectorEffect="non-scaling-stroke" stroke="#f4f4fa" d="M655 373V455M665 373V455M695 375V454M705 375V454M715 376V454M725 376V454M735 376V453M745 376V452M755 375V451M765 375V450M775 374V449M785 373V448" />
    <path d="M798 368L812 366V480L800 482z" fill="#aaaac4" />
    <path vectorEffect="non-scaling-stroke" stroke="#777" d="M650 467L800 462L808 480L790 488L640 497L650 467M645 482L790 476M710 465V495M750 465L755 490M730 476L735 494" />
    <path d="M645 467L660 467L656 474L643 474zM762 465L795 465L790 474L760 472z" fill="#222" />
    <path vectorEffect="non-scaling-stroke" stroke="#c3ebc3" d="M600 490L660 462M600 505L700 475M625 520L640 480M650 515L660 495M735 512L730 495M765 512L755 490M790 508L775 485M810 505L800 480M840 492L800 486M600 497L840 490M610 478L650 470" />
  </g></svg>
);
const Thumb11 = () => (
  <svg width="192" height="142" fill="none"><g transform="scale(.4974 .3333) translate(-1057 -207)">
    <path vectorEffect="non-scaling-stroke" stroke="#d3f0d3" d="M1105 415L1443 412M1108 490L1220 470L1330 450M1145 502L1260 480M1220 528L1300 470M1245 532L1443 480M1120 485L1443 505M1180 470L1360 515" />
    <path vectorEffect="non-scaling-stroke" stroke="#888" d="M1150 414L1330 411M1160 482L1300 452L1330 448M1175 486L1330 495M1190 475L1330 480M1220 500L1330 460M1240 470L1330 510M1260 462L1330 490" />
    <path d="M1155 482L1170 477L1190 481L1170 487zM1290 454L1310 448L1330 450V456L1300 458zM1165 412L1330 409V414L1180 415z" fill="#444" opacity=".8" />
    <path d="M1216 353H1234V412H1216zM1216 435H1234V480H1216z" fill="#d4d4e4" stroke="#a9a9c0" vectorEffect="non-scaling-stroke" />
    <path d="M1224 353V412M1224 435V480" stroke="#8f8fae" vectorEffect="non-scaling-stroke" />
  </g></svg>
);
const Thumb12 = () => (
  <svg width="192" height="142" fill="none"><g transform="scale(.523 .3333) translate(-128 -207)">
    <path vectorEffect="non-scaling-stroke" stroke="#dcf3dc" d="M335 350L495 560M380 330L495 440M440 300L300 560M495 330L330 600M220 560L400 632M495 470L250 632" />
    <path vectorEffect="non-scaling-stroke" stroke="#b2b2b2" d="M465 318L495 332M465 318L360 390M430 340L470 375M400 362L450 405M455 350L470 345L495 360L480 372zM495 350L285 570M495 362L300 590M495 385L310 612M380 385L430 430M495 440L470 550L420 490M440 400L495 430M400 490L440 455M222 625L285 560M222 625L205 570M230 622L300 575M310 612L280 560M365 500Q380 540 400 535L370 490M410 445L450 420M330 520Q360 540 370 520M300 550Q320 580 345 555M425 440L420 490" />
    <path vectorEffect="non-scaling-stroke" stroke="#777" strokeWidth="1.500" d="M200 552Q220 565 240 550M205 540L235 556M225 560V540" />
    <path d="M300 340L365 396L358 492L326 525L300 500z" fill="#c5cf86" fillOpacity=".9" />
    <path d="M300 478L333 462" stroke="#e02020" vectorEffect="non-scaling-stroke" strokeWidth="1.500" />
    <path vectorEffect="non-scaling-stroke" stroke="#888" strokeWidth="2" strokeDasharray="2 1" d="M348 446H355M382 418H388M408 384H414M460 494H466M490 560V570" />
  </g></svg>
);
const Thumb13 = () => (
  <svg width="192" height="142" fill="none"><g transform="scale(.523 .3333) translate(-618 -207)">
    <path vectorEffect="non-scaling-stroke" stroke="#e0f6e0" d="M665 435L740 395L960 305M698 493L985 380M717 527L985 430M777 632L985 500M850 330L985 470M900 310L985 390M840 395L985 580M730 390L985 632M800 440L700 500M850 480L740 560" />
    <path vectorEffect="non-scaling-stroke" stroke="#b2b2b2" d="M835 375L960 302L985 310M728 408L760 395M728 408L765 450M808 432L942 547L985 500M815 432L942 540L985 492" />
    <path d="M815 338L833 332V412L812 420zM819 345L827 342V400L818 404z" fill="#e8e8ec" stroke="#999" vectorEffect="non-scaling-stroke" />
    <path d="M760 355L810 338V428L766 453z" fill="#d04a4a" stroke="#7a2020" vectorEffect="non-scaling-stroke" />
    <path vectorEffect="non-scaling-stroke" stroke="#5fbf6a" d="M664 435h5M695 493a4 4 0 1 0 7 0a4 4 0 1 0-7 0M713 527a4 4 0 1 0 8 0a4 4 0 1 0-8 0M775 632h5" />
    <path vectorEffect="non-scaling-stroke" stroke="#aaa" strokeWidth="2" strokeDasharray="1 3" d="M710 388L755 370M850 330L925 300" />
  </g></svg>
);

/* ---------- composed parts ---------- */

const Select = ({ label, value, w, gray, gap }: { label: string; value: string; w: number; gray?: boolean; gap?: number }) => (
  <SelectWrap $w={w} $gray={gray} $gap={gap}>
    <select id={label} aria-label={label} defaultValue={value}><option>{value}</option></select>
    <Chevron d="down" />
  </SelectWrap>
);

const MaximizeButton = ({ top }: { top?: boolean }) => (
  <MaxButton type="button" aria-label="Maximize" $top={top}><MaxIcon /></MaxButton>
);

const CommentList = ({ large, id, text, rows }: { large?: boolean; id: string; text: string; rows: string[] }) => (
  <Comments $large={large}>
    <NewComment>
      <AuthorTag htmlFor={id}>BS</AuthorTag>
      <CommentInput id={id} />
    </NewComment>
    <CommentRow $large={large} $bg="#fff">
      <CommentAuthor $large={large}>AU</CommentAuthor>
      <CommentText>{text}</CommentText>
      <CommentCount $large={large}>1</CommentCount>
    </CommentRow>
    {rows.map((bg, i) => <CommentRow key={i} $large={large} $bg={bg} />)}
  </Comments>
);

const stripes = ["#fff", "#e1e1e1", "#fff", "#e9e9e9", "#fff", "#f1f1f1", "#fff", "#fafafa"];

const issues: [string, string][] = [
  ["10", "Window components, W-3, Height differs"],
  ["11", "Window components, W-4, Height differs"],
  ["12", "Boundary"],
  ["13", ""],
  ["18", "FS-3 too close to W-4 component"],
  ["19", "Column components, C-2, Dia."],
  ["2", "No Construction Types"],
  ["3", "Column Components don't touch"],
  ["4", "Wall.3.7, 0.6%"],
  ["5", "Wall.3.13, 1.2%"],
  ["6", "Space.0.15 : Women[105]"],
  ["9", "Window components, W-2, Width differs"],
];

const sorter = [
  { n: "", id: "9", cap: "components, W-2, Width differs", art: <Thumb9 />, tree: false },
  { n: "8", id: "10", cap: "Window components, W-3, Height differs", art: <Thumb10 />, tree: true },
  { n: "9", id: "11", cap: "Window components, W-4, Height differs", art: <Thumb11 />, tree: true },
  { n: "10", id: "12", cap: "Boundary", art: <Thumb12 />, tree: true },
  { n: "11", id: "13", cap: "", art: <Thumb13 />, tree: false },
  { n: "12", id: "18", cap: "FS-3 too close to W-4 component", art: <WindowScene w={192} h={142} />, tree: true },
];

const PresentationPanel = () => (
  <Panel>
    <PanelHeader $h={26}>
      <BoardIcon />
      <PanelTitle>Presentation</PanelTitle>
      <LinkButton><NewStackIcon />New Presentation</LinkButton>
      <LinkButton><ScrollIcon />Report</LinkButton>
      <MaximizeButton />
    </PanelHeader>
    <PresentationList>
      <PresentationItem $bg="#fff"><StackIcon /><span>General Presentation (4)</span><RefreshIcon /></PresentationItem>
      <PresentationItem $bg="#3399ff" $on><StackIcon /><span>Issues (12)</span><RefreshIcon /></PresentationItem>
      {stripes.map((bg, i) => <PresentationItem key={i} $bg={bg} aria-hidden />)}
    </PresentationList>
    <Callout $x={58} $y={110} $h={56}>Presentation View</Callout>
  </Panel>
);

const IssuesPanel = () => (
  <Panel $grow>
    <PanelHeader $h={25}>
      <ListIcon />
      <PanelTitle>Issues</PanelTitle>
      <LinkButton><NewIssueIcon />New Issue</LinkButton>
      <Divider />
      <IconButton aria-label="Flag"><FlagIcon /></IconButton>
      <MaximizeButton />
    </PanelHeader>
    <TableArea>
      <TableView>
        <Table>
          <thead>
            <tr>
              <Th $w={25} aria-label="Flag"><FlagIcon /></Th>
              <Th $w={107}><SortHead><svg width="7" height="4" viewBox="0 0 7 4"><path d="M0 4L3.500 0 7 4z" fill="#4e86a8" /></svg><span>Presentation</span></SortHead></Th>
              <Th $w={77}>Tracking ID</Th>
              <Th>Title</Th>
            </tr>
          </thead>
          <tbody>
            {issues.map(([id, title], i) => (
              <Tr key={id} $bg={id === "18" ? "#3399ff" : i % 2 ? "#dedede" : "#fff"} $on={id === "18"}>
                <Td /><Td>Issues</Td><Td>{id}</Td><Td>{title}</Td>
              </Tr>
            ))}
          </tbody>
        </Table>
      </TableView>
      <VBar>
        <ColumnTools>
          <ColumnControl aria-label="Columns"><svg width="11" height="12" viewBox="0 0 11 12"><path d="M.5 1.500h9v7h-9zM.5 5h9M5 1.500v4" fill="#fff" stroke="#111" strokeWidth="1.300" /><path d="M3 7h7l-3.500 4z" fill="#111" /></svg></ColumnControl>
          <ArrowButton aria-label="Scroll up"><Chevron d="up" /></ArrowButton>
        </ColumnTools>
        <ArrowButton aria-label="Scroll down"><Chevron d="down" /></ArrowButton>
      </VBar>
      <HBar>
        <ArrowButton aria-label="Scroll left"><Chevron d="left" /></ArrowButton>
        <HTrack><HThumb $w="64%" /></HTrack>
        <ArrowButton aria-label="Scroll right"><Chevron d="right" /></ArrowButton>
      </HBar>
    </TableArea>
    <Callout $x={58} $y={338} $h={56}>Issues View</Callout>
  </Panel>
);

const DetailsPanel = () => (
  <Panel>
    <PanelHeader $h={27} $low>
      <DetailsIcon />
      <PanelTitle>Issue Details</PanelTitle>
      <IconButton aria-label="Previous"><Tri /></IconButton>
      <PagerLabel>12</PagerLabel>
      <IconButton aria-label="Next"><Tri flip /></IconButton>
      <HeaderSpacer />
      <MaximizeButton top />
    </PanelHeader>
    <DetailsBody>
      <DetailsForm onSubmit={(e) => e.preventDefault()}>
        <FormRow>
          <label htmlFor="title">Title</label>
          <TextInput id="title" defaultValue="FS-3 too close to W-4 component" />
        </FormRow>
        <FormRow>
          <LabelStack>
            <label htmlFor="description">Description</label>
            <SmallButton type="button" aria-label="Edit description"><NoteIcon /></SmallButton>
          </LabelStack>
          <TextBox id="description" />
        </FormRow>
        <Fieldset>
          <Legend>Coordination</Legend>
          <FieldRow>
            <RejectMark><RedX /></RejectMark>
            <FieldLabel $w={101} htmlFor="Decision">Rejected (2)</FieldLabel>
            <Select label="Decision" value="Rejected" w={74} gray />
          </FieldRow>
          <FieldRow>
            <FieldLabel $w={37} htmlFor="Status">Status</FieldLabel>
            <Select label="Status" value="Open" w={98} gap={19} />
            <FieldLabel $w={59} htmlFor="BCF Status">BCF Status</FieldLabel>
            <Select label="BCF Status" value="Error" w={69} gray />
          </FieldRow>
          <FieldRow>
            <FieldLabel as="span" $w={77}>Responsibilities</FieldLabel>
            <RoleTag>ARC</RoleTag>
            <SmallButton type="button" aria-label="Add responsibility"><PlusIcon /></SmallButton>
          </FieldRow>
        </Fieldset>
        <TabList role="tablist">
          <Tab type="button" role="tab" $on><PeopleIcon />Communication</Tab>
          <Tab type="button" role="tab"><ComponentIcon />Components</Tab>
        </TabList>
        <TabPanel role="tabpanel">
          <Snapshot>
            <SnapshotImage><WindowScene w={254} h={190} /></SnapshotImage>
            <SnapshotTools>
              <SmallButton type="button" aria-label="Add"><PlusIcon /></SmallButton>
              <SmallButton type="button" aria-label="Update"><RefreshIcon /></SmallButton>
              <SmallButton type="button" aria-label="Remove"><CrossIcon c="#8c8c8c" e="#777" /></SmallButton>
            </SnapshotTools>
          </Snapshot>
          <CommentList id="comment" text="Consider making the window lower to avoid suspended ceiling to be seen through window." rows={["#dedede", "#fff", "#eee", "#fff"]} />
        </TabPanel>
        <LocationRow>
          <FieldLabel $w={65} htmlFor="location">Location</FieldLabel>
          <LocationBox id="location" readOnly defaultValue={"2. Second floor\nCorridor[320]"} />
          <IconButton type="button" aria-label="Clear location"><CrossIcon /></IconButton>
        </LocationRow>
      </DetailsForm>
      <VBar>
        <ArrowButton aria-label="Scroll up"><Chevron d="up" /></ArrowButton>
        <VTrack><VThumb $h="81%" /></VTrack>
        <ArrowButton aria-label="Scroll down"><Chevron d="down" /></ArrowButton>
      </VBar>
    </DetailsBody>
    <Callout $x={98} $y={304}>Issue Details View</Callout>
  </Panel>
);

const ThreeDView = () => (
  <ThreeD>
    <ThreeDHeader>
      <CubesIcon />
      <PanelTitle>3D</PanelTitle>
      <ThreeDTools role="toolbar">
        <IconButton aria-label="Undo"><UndoIcon /></IconButton>
        <IconButton aria-label="Redo"><UndoIcon flip /></IconButton>
        <Divider />
        <LinkButton><WalkIcon />Walk<Caret /></LinkButton>
        <LinkButton><InfoIcon />Info<Caret /></LinkButton>
        <Divider />
        <IconButton aria-label="Solid"><BoxIcon /></IconButton>
        <IconButton aria-label="Wireframe"><BoxIcon f="#fff" side="#7fb0a0" dash /></IconButton>
        <IconButton aria-label="Transparent"><BoxIcon f="#b9ccf5" side="#6f9f9f" dash /></IconButton>
        <LinkButton aria-label="Colors"><PaintIcon /><Caret /></LinkButton>
        <LinkButton aria-label="Section"><PrismIcon /><Caret /></LinkButton>
        <Divider />
        <IconButton aria-label="Zoom to fit"><ZoomIcon k="fit" /></IconButton>
        <IconButton aria-label="Zoom in"><ZoomIcon k="in" /></IconButton>
        <IconButton aria-label="Zoom out"><ZoomIcon k="out" /></IconButton>
        <IconButton aria-label="Zoom area"><ZoomAreaIcon /></IconButton>
        <LinkButton aria-label="Select"><PickIcon /><Caret /></LinkButton>
        <Divider />
        <IconButton aria-label="Copy view"><SheetsIcon /></IconButton>
        <Divider />
        <IconButton aria-label="Plan"><PlanIcon /></IconButton>
        <IconButton aria-label="Layers"><LayersIcon /></IconButton>
        <MaximizeButton />
      </ThreeDTools>
    </ThreeDHeader>
    <Model />
    <InfoPanel>
      <InfoLeft>
        <InfoTitle>FS-3 too close to W-4 component</InfoTitle>
        <InfoMeta>AU, Mar 22, 2012</InfoMeta>
        <PlayRow>
          <PlayButton aria-label="First"><StepIcon /></PlayButton>
          <PlayButton aria-label="Previous"><Tri /></PlayButton>
          <PlayButton aria-label="Next"><Tri flip /></PlayButton>
          <PlayButton aria-label="Last"><StepIcon flip /></PlayButton>
          <PlayButton aria-label="Film"><FilmStripIcon /></PlayButton>
          <PlayButton aria-label="Present"><ProjectorIcon /></PlayButton>
          <Select label="Issue status" value="Open" w={98} />
          <AddButton aria-label="Add"><PlusIcon /><Caret /></AddButton>
        </PlayRow>
      </InfoLeft>
      <CommentList large id="comment3d" text="Consider making the window lower to avoid suspended" rows={["#dedede", "#fff", "transparent", "#fff"]} />
      <Callout $x={295} $y={36}>3D View</Callout>
    </InfoPanel>
  </ThreeD>
);

const SorterPanel = () => (
  <Panel>
    <PanelHeader>
      <SorterIcon />
      <PanelTitle>Issue Sorter</PanelTitle>
      <MaximizeButton />
    </PanelHeader>
    <SorterBody>
      <SorterMain>
        <SorterBand />
        <SorterCells>
          {sorter.map((c, i) => (
            <SorterCell key={c.id} $first={i === 0} $on={c.n === "12"}>
              <CellTop>
                <CellSide $first={i === 0}>
                  <CellIndex>{c.n}</CellIndex>
                  {c.tree && <TreeIcon />}
                </CellSide>
                <Thumb>{c.art}<ThumbId>{c.id}</ThumbId></Thumb>
              </CellTop>
              <CellCaption $first={i === 0}>{c.cap}</CellCaption>
            </SorterCell>
          ))}
        </SorterCells>
      </SorterMain>
      <VBar>
        <ArrowButton aria-label="Scroll up"><Chevron d="up" /></ArrowButton>
        <ArrowButton aria-label="Scroll down"><Chevron d="down" /></ArrowButton>
      </VBar>
      <SorterScroll>
        <ArrowButton aria-label="Scroll left"><Chevron d="left" /></ArrowButton>
        <HTrack><HThumb $w="48%" $right /></HTrack>
        <ArrowButton aria-label="Scroll right"><Chevron d="right" /></ArrowButton>
      </SorterScroll>
    </SorterBody>
    <Callout $x={654} $y={105}>Issue Sorter View</Callout>
  </Panel>
);

export default function App() {
  return (
    <Desktop>
      <GlobalStyle />
      <Frame>
        <TitleBar>
          <TitleIcon><svg width="16" height="16" viewBox="0 0 16 16"><circle cx="8" cy="8" r="5.700" fill="none" stroke="#ffc800" strokeWidth="2.400" /></svg></TitleIcon>
          <WindowTitle>Solibri Model Checker - SMC Building</WindowTitle>
          <WindowButtons>
            <WindowButton aria-label="Minimize"><svg width="8" height="10"><path d="M0 7.500h8" stroke="#222" strokeWidth="3" /></svg></WindowButton>
            <WindowButton aria-label="Restore"><svg width="11" height="9"><path d="M.5 1.500h10v7H.5z" fill="none" stroke="#222" /><path d="M0 1.500h11" stroke="#222" strokeWidth="3" /></svg></WindowButton>
            <WindowButton $close aria-label="Close"><svg width="9" height="8"><path d="M1 0l7 8M8 0L1 8" stroke="#fff" strokeWidth="1.800" /></svg></WindowButton>
          </WindowButtons>
        </TitleBar>
        <Client>
          <MenuBar>
            <MenuNav>
              <MenuButton>File</MenuButton>
              <MenuButton>Model</MenuButton>
              <MenuButton>Checking</MenuButton>
              <MenuButton $active>Communication</MenuButton>
              <MenuButton>Information Takeoff</MenuButton>
              <MenuButton>+</MenuButton>
            </MenuNav>
            <Tools>
              <Todo>To-Do (0/2)</Todo>
              <IconButton aria-label="To-Do list"><TodoIcon /></IconButton>
              <SearchInput aria-label="Search" />
              <IconButton aria-label="Find"><BinocularsIcon /></IconButton>
              <IconButton aria-label="Film"><FilmIcon /></IconButton>
              <IconButton aria-label="Help"><InfoIcon t="?" /></IconButton>
            </Tools>
          </MenuBar>
          <Workspace>
            <LeftColumn>
              <PresentationPanel />
              <IssuesPanel />
            </LeftColumn>
            <RightColumn>
              <TopRow>
                <DetailsPanel />
                <ThreeDView />
              </TopRow>
              <SorterPanel />
            </RightColumn>
          </Workspace>
          <StatusBar>
            <StatusRole>Role: Architectural Checking</StatusRole>
            <span>Selected: 0</span>
            <span>Tracking ID: 18</span>
            <span>Status: Open</span>
            <span>5/12</span>
          </StatusBar>
        </Client>
      </Frame>
      <TaskStrip>
        <TaskItem /><TaskItem /><TaskItem /><TaskItem /><TaskItem $on /><TaskItem /><TaskItem /><TaskItem /><TaskItem />
      </TaskStrip>
    </Desktop>
  );
}
